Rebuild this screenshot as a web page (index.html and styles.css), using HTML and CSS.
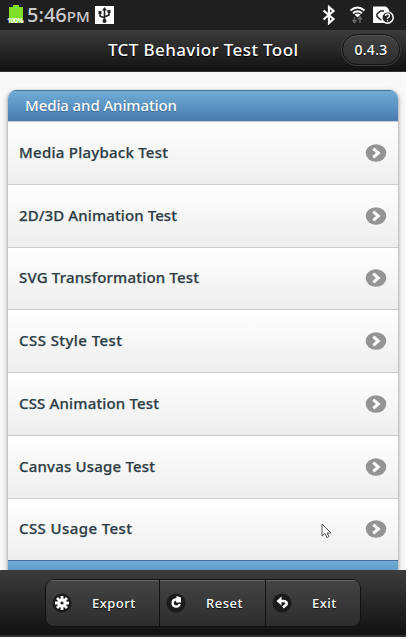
FILE: index.html
```
<!DOCTYPE html>
<html lang="en">
<head>
<meta charset="utf-8">
<title>TCT Behavior Test Tool</title>
<link rel="stylesheet" href="styles.css">
</head>
<body>
<svg class="defs" width="0" height="0" aria-hidden="true">
  <symbol id="arrow" viewBox="0 0 22 18"><ellipse cx="11" cy="9" rx="10.3" ry="8.8" fill="#949494"/><path d="M8.3 4.6 13.3 9l-5 4.4" fill="none" stroke="#fff" stroke-width="3"/></symbol>
</svg>
<div class="screen">
  <div class="status">
    <svg class="battery" width="18" height="20" viewBox="0 0 18 20"><path d="M6 1h6v2h4v16H2V3h4z" fill="#80df28"/></svg>
    <span class="percent">100%</span>
    <span class="time">5:46<small>PM</small></span>
    <svg class="usb" width="19" height="18" viewBox="0 0 19 18"><path fill="#fff" d="M0 0h19v18H0z"/><path d="M9.5 3v11M9.5 12l-4.500-2V7M9.500 11l4.500-2V5" fill="none" stroke="#222" stroke-width="1.600"/><path d="m9.500 1 2.500 3.500H7zM3.500 5h3v3h-3zM12.500 4h3v3h-3z" fill="#222"/><circle cx="9.500" cy="15" r="2" fill="#222"/></svg>
    <svg class="tray" width="74" height="20" viewBox="0 0 74 20">
      <path d="m1.500 5.500 10 8.500-4.500 4V2l4.500 4-10 8.500" fill="none" stroke="#fff" stroke-width="2.200"/>
      <g fill="none" stroke="#fff" stroke-width="2"><path d="M28.500 5.500q7-6 14 0M31 8.200q4.500-3.800 9 0"/></g><path d="m32.500 9.500q3-2 6 0l-3 3z" fill="#fff"/>
      <path d="M32.500 12v5m-2-2 2 2.500 2-2.500M38 18v-5.500m-2 2 2-2.500 2 2.500" fill="none" stroke="#666" stroke-width="1.500"/>
      <path d="M51 1.500h13l3 3V18H51z" fill="#fff"/><path d="M62 6h-3.500L55 9v2.500l3.500 3H61" fill="none" stroke="#222" stroke-width="1.500"/>
      <circle cx="65.500" cy="12.500" r="5.700" fill="#222" stroke="#fff" stroke-width="1.500"/><path d="M63.500 11q0-2 2-2t2 2q0 1-2 2v.8M65.500 15v1.300" fill="none" stroke="#fff" stroke-width="1.300"/>
    </svg>
  </div>
  <header class="header"><h1><svg class="title" width="190" height="24"><text x="0" y="18" textLength="190">TCT Behavior Test Tool</text></svg></h1><span class="version">0.4.3</span></header>
  <main class="content">
    <ul class="list">
      <li class="divider"><svg class="lbl" width="155" height="24"><text x="0" y="17" textLength="152">Media and Animation</text></svg></li>
      <li class="row"><svg class="lbl" width="190" height="24"><text x="0" y="17" textLength="149">Media Playback Test</text></svg><svg class="arrow"><use href="#arrow"/></svg></li>
      <li class="row"><svg class="lbl" width="190" height="24"><text x="0" y="17" textLength="158">2D/3D Animation Test</text></svg><svg class="arrow"><use href="#arrow"/></svg></li>
      <li class="row"><svg class="lbl" width="190" height="24"><text x="0" y="17" textLength="180">SVG Transformation Test</text></svg><svg class="arrow"><use href="#arrow"/></svg></li>
      <li class="row"><svg class="lbl" width="190" height="24"><text x="0" y="17" textLength="103">CSS Style Test</text></svg><svg class="arrow"><use href="#arrow"/></svg></li>
      <li class="row"><svg class="lbl" width="190" height="24"><text x="0" y="17" textLength="140">CSS Animation Test</text></svg><svg class="arrow"><use href="#arrow"/></svg></li>
      <li class="row"><svg class="lbl" width="190" height="24"><text x="0" y="17" textLength="136">Canvas Usage Test</text></svg><svg class="arrow"><use href="#arrow"/></svg></li>
      <li class="row"><svg class="lbl" width="190" height="24"><text x="0" y="17" textLength="113">CSS Usage Test</text></svg><svg class="arrow"><use href="#arrow"/></svg></li>
      <li class="divider next"></li>
    </ul>
  </main>
  <footer class="footer">
    <div class="group">
      <div class="btn"><svg class="icon" viewBox="0 0 20 20"><circle cx="10" cy="10" r="9.500"/><g stroke="#fff" stroke-width="2.800"><path d="M10 3v14M3 10h14M5 5l10 10M15 5 5 15"/></g><circle cx="10" cy="10" r="4.500" fill="#fff"/><circle cx="10" cy="10" r="1.600"/></svg><span>Export</span></div>
      <div class="btn"><svg class="icon" viewBox="0 0 20 20"><circle cx="10" cy="10" r="9.500"/><path d="M11.500 6.500H9.500a3.600 3.600 0 1 0 4.200 4.500" fill="none" stroke="#fff" stroke-width="2.300"/><path d="m10.500 3 4.500 1.500v5h-5z" fill="#fff"/></svg><span>Reset</span></div>
      <div class="btn"><svg class="icon" viewBox="0 0 20 20"><circle cx="10" cy="10" r="9.500"/><path d="M8 8h3.500q4 .5 3 3.500L11 14.500" fill="none" stroke="#fff" stroke-width="2.600"/><path d="M9.500 3.500v9L4.500 8z" fill="#fff"/></svg><span>Exit</span></div>
    </div>
  </footer>
  <svg class="cursor" width="11" height="16" viewBox="0 0 11 16"><path d="M1 1v12l3-2.500 2 4 2-1-2-3.500h4z" fill="#fff" stroke="#555"/></svg>
</div>
</body>
</html>
```
FILE: styles.css
```
* { box-sizing: border-box; }
body { margin: 0; background: #fff; font-family: "Noto Sans", "Open Sans", sans-serif; }
.defs { position: absolute; }
.screen { position: relative; width: 406px; height: 637px; overflow: hidden; display: flex; flex-direction: column; background: #f8f8f8; }
.status { height: 30px; flex: none; display: flex; align-items: center; background: #1f1f1f; padding: 0 10px 0 7px; position: relative; }
.battery { margin-bottom: 2px; }
.percent { position: absolute; left: 7px; top: 16px; font-size: 7px; line-height: 9px; font-weight: 700; color: #fff; letter-spacing: -.5px; }
.time { margin-left: 2px; width: 68px; font-size: 20px; line-height: 28px; color: #ccc; font-weight: 500; white-space: nowrap; }
.time small { font-size: 15px; }
.usb { flex: none; }
.tray { margin-left: auto; }
.header { height: 42px; flex: none; display: flex; align-items: center; justify-content: flex-end; background: linear-gradient(#3c3c3c, #111); border-bottom: 1px solid #333; padding: 0 6px 2px 0; }
h1 { margin: 0 44px 0 0; width: 190px; font-size: 17px; line-height: 24px; font-weight: 500; text-shadow: 0 1px 1px #000; }
.title { display: block; fill: #fff; overflow: visible; }
.version { width: 58px; height: 31px; border-radius: 16px; border: 1px solid #151515; box-shadow: 0 0 0 1px #3c3c3c, inset 0 1px 0 #555; background: linear-gradient(#444, #2d2d2d); color: #fff; font-size: 14px; font-weight: 500; letter-spacing: .3px; display: flex; align-items: center; justify-content: center; padding-bottom: 1px; text-shadow: 0 1px 1px #111; }
.content { height: 498px; flex: none; overflow: hidden; padding: 18px 7px 0; }
.list { list-style: none; margin: 0; padding: 0; border: 1px solid #c5c5c5; border-top: 0; border-radius: 9px 9px 0 0; box-shadow: 0 1px 4px rgba(0,0,0,.3); overflow: hidden; }
.divider { height: 31px; background: linear-gradient(#6facd5, #497bae); border-top: 1px solid #456f9a; padding: 0 0 1px 17px; display: flex; align-items: center; }
.lbl { display: block; font-size: 15px; font-weight: 500; fill: #2f3e46; stroke: #2f3e46; stroke-width: .25px; overflow: visible; }
.divider .lbl { fill: #fff; stroke: none; text-shadow: 0 1px 1px #3e6790; }
.row { height: 62.750px; display: flex; align-items: center; justify-content: space-between; padding: 0 11px; border-top: 1px solid #ccc; background: linear-gradient(#fff, #eee); }
.arrow { width: 22px; height: 18px; }
.footer { flex: 1; background: linear-gradient(#3c3c3c, #111); padding: 9px 0 0 45px; border-bottom: 2px solid #343032; }
.group { display: flex; width: 316px; height: 48px; border: 1px solid #111; border-radius: 9px; overflow: hidden; }
.btn { display: flex; align-items: center; flex: none; width: 114px; padding-left: 6px; background: linear-gradient(#444, #2d2d2d); border-right: 1px solid #111; box-shadow: inset 0 1px 0 #666; color: #fff; font-size: 13px; font-weight: 500; letter-spacing: .5px; text-shadow: 0 1px 1px #111; }
.btn + .btn { width: 106px; }
.btn:last-child { width: 94px; border: 0; }
.btn span { margin-left: 20px; }
.icon { width: 20px; height: 20px; fill: #1b1b1b; flex: none; }
.cursor { position: absolute; left: 321px; top: 523px; }
```
